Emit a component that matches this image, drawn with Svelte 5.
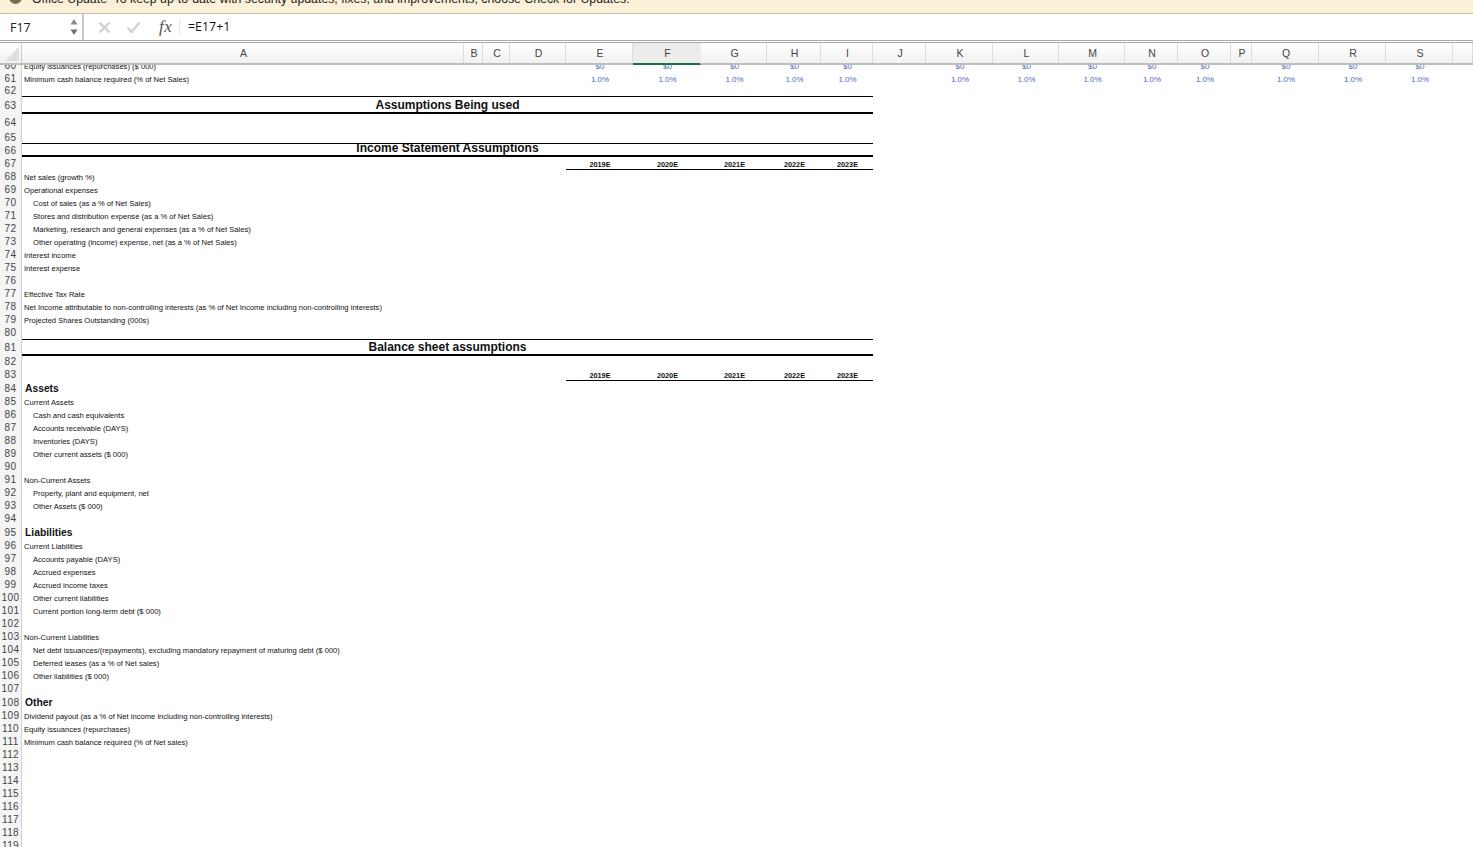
<script>
  const letters = 'ABCDEFGHIJKLMNOPQRST'.split('');
  const dataCols = ['E', 'F', 'G', 'H', 'I', 'K', 'L', 'M', 'N', 'O', 'Q', 'R', 'S'];
  const years = ['2019E', '2020E', '2021E', '2022E', '2023E'];
  const heights = { 62: 11, 63: 18, 64: 17, 65: 12, 66: 14, 67: 13, 81: 16, 84: 14, 95: 14, 108: 14 };
  const content = {
    60: { text: 'Equity issuances (repurchases) ($ 000)', values: '$0' },
    61: { text: 'Minimum cash balance required (% of Net Sales)', values: '1.0%' },
    63: { title: 'Assumptions Being used' },
    66: { title: 'Income Statement Assumptions', low: true },
    67: { years: true },
    68: { text: 'Net sales (growth %)' },
    69: { text: 'Operational expenses' },
    70: { text: 'Cost of sales (as a % of Net Sales)', indent: true },
    71: { text: 'Stores and distribution expense (as a % of Net Sales)', indent: true },
    72: { text: 'Marketing, research and general expenses (as a % of Net Sales)', indent: true },
    73: { text: 'Other operating (income) expense, net (as a % of Net Sales)', indent: true },
    74: { text: 'Interest income' },
    75: { text: 'Interest expense' },
    77: { text: 'Effective Tax Rate' },
    78: { text: 'Net Income attributable to non-controlling interests (as % of Net Income including non-controlling interests)' },
    79: { text: 'Projected Shares Outstanding (000s)' },
    81: { title: 'Balance sheet assumptions' },
    83: { years: true },
    84: { text: 'Assets', bold: true },
    85: { text: 'Current Assets' },
    86: { text: 'Cash and cash equivalents', indent: true },
    87: { text: 'Accounts receivable (DAYS)', indent: true },
    88: { text: 'Inventories (DAYS)', indent: true },
    89: { text: 'Other current assets ($ 000)', indent: true },
    91: { text: 'Non-Current Assets' },
    92: { text: 'Property, plant and equipment, net', indent: true },
    93: { text: 'Other Assets ($ 000)', indent: true },
    95: { text: 'Liabilities', bold: true },
    96: { text: 'Current Liabilities' },
    97: { text: 'Accounts payable (DAYS)', indent: true },
    98: { text: 'Accrued expenses', indent: true },
    99: { text: 'Accrued income taxes', indent: true },
    100: { text: 'Other current liabilities', indent: true },
    101: { text: 'Current portion long-term debt ($ 000)', indent: true },
    103: { text: 'Non-Current Liabilities' },
    104: { text: 'Net debt issuances/(repayments), excluding mandatory repayment of maturing debt ($ 000)', indent: true },
    105: { text: 'Deferred leases (as a % of Net sales)', indent: true },
    106: { text: 'Other liabilities ($ 000)', indent: true },
    108: { text: 'Other', bold: true },
    109: { text: 'Dividend payout (as a % of Net income including non-controlling interests)' },
    110: { text: 'Equity issuances (repurchases)' },
    111: { text: 'Minimum cash balance required (% of Net sales)' }
  };
  const rows = [];
  for (let n = 60; n <= 119; n++) rows.push({ n, h: heights[n] ?? 13, ...(content[n] ?? {}) });
</script>

<div class="banner">
  <span class="badge"></span>
  <span class="message"><b>Office Update</b>&nbsp; To keep up-to-date with security updates, fixes, and improvements, choose Check for Updates.</span>
</div>

<div class="toolbar">
  <div class="namebox">
    <span>F17</span>
    <svg class="stepper" width="10" height="20" viewBox="0 0 10 20">
      <path d="M5 2 L8.5 7.5 H1.5 Z" fill="#8a8a8a" />
      <path d="M5 18 L8.5 12.5 H1.5 Z" fill="#6f6f6f" />
    </svg>
  </div>
  <div class="actions">
    <svg width="13" height="13" viewBox="0 0 13 13"><path d="M1.5 1.5 L11.5 11.5 M11.5 1.5 L1.5 11.5" stroke="#d0d0d0" stroke-width="2.2" fill="none" /></svg>
    <svg width="15" height="13" viewBox="0 0 15 13"><path d="M1.5 6.5 L5.5 11 L13.5 1.5" stroke="#d0d0d0" stroke-width="2.2" fill="none" /></svg>
    <span class="fx">fx</span>
  </div>
  <div class="formula">=E17+1</div>
</div>

<div class="colheads">
  <div class="corner"><svg width="16" height="16" viewBox="0 0 16 16"><path d="M15 1 V15 H1 Z" fill="#dedede" /></svg></div>
  {#each letters as l}
    <div class="colhead" class:selected={l === 'F'}>{l === 'T' ? '' : l}</div>
  {/each}
</div>

<div class="sheet">
  {#each rows as r}
    <div class="row" style="height:{r.h}px">
      <div class="rowhead">{r.n}</div>
      {#if r.title}
        <div class="title" class:low={r.low}>{r.title}</div>
      {:else if r.years}
        <div class="years">
          {#each years as y}<span>{y}</span>{/each}
        </div>
      {:else}
        {#if r.text}
          <div class="label" class:indent={r.indent} class:bold={r.bold}>{r.text}</div>
        {/if}
        {#if r.values}
          {#each dataCols as c}
            <div class="value" style="grid-column:{letters.indexOf(c) + 2}">{r.values}</div>
          {/each}
        {/if}
      {/if}
    </div>
  {/each}
</div>

<style>
  :global(html), :global(body) {
    margin: 0;
    height: 100%;
    overflow: hidden;
    background: #fff;
    font-family: "Liberation Sans", Arial, sans-serif;
  }
  .banner {
    height: 13px;
    background: #fbf1d9;
    border-bottom: 1px solid #c9bfa9;
    display: flex;
    align-items: flex-end;
    overflow: hidden;
    padding-left: 9px;
    gap: 10px;
  }
  .badge {
    flex: none;
    width: 13px;
    height: 13px;
    margin-bottom: 9px;
    border-radius: 50%;
    background: #7a6a50;
  }
  .message {
    flex: none;
    font-size: 12.3px;
    line-height: 14px;
    margin-bottom: 7px;
    color: #1c1c1c;
    white-space: nowrap;
  }
  .message b { font-weight: 400; }
  .toolbar {
    height: 26px;
    background: #fff;
    display: flex;
    align-items: center;
    border-bottom: 3px double #a9a9a9;
  }
  .namebox {
    width: 84px;
    height: 100%;
    box-sizing: border-box;
    border-right: 2px solid #c9c9c9;
    padding: 0 3px 0 10px;
    display: flex;
    align-items: center;
    justify-content: space-between;
    font-family: "Open Sans", sans-serif;
    font-size: 12.5px;
    color: #222;
  }
  .actions {
    width: 95px;
    height: 100%;
    display: flex;
    align-items: center;
    padding-left: 14px;
    box-sizing: border-box;
    gap: 15px;
  }
  .fx {
    font-family: "Liberation Serif", serif;
    font-style: italic;
    font-size: 17px;
    color: #555;
    padding-left: 3px;
    letter-spacing: 0.5px;
  }
  .formula {
    border-left: 1px solid #e2e2e2;
    padding-left: 8px;
    height: 14px;
    line-height: 14px;
    font-family: "Open Sans", sans-serif;
    font-size: 12.4px;
    color: #111;
  }
  .colheads, .row {
    display: grid;
    grid-template-columns: 22px 442px 19px 27px 56px 67px 68px 66px 54px 52px 53px 67px 66px 66px 53px 53px 21px 67px 67px 67px 20px;
  }
  .colheads {
    position: relative;
    z-index: 1;
    height: 22px;
    box-sizing: border-box;
    background: linear-gradient(#fff, #f1f1f1);
    border-bottom: 2px solid #bdbdbd;
  }
  .corner {
    border-right: 1px solid #c9c9c9;
    display: flex;
    align-items: flex-end;
    padding-left: 4px;
    padding-bottom: 1px;
  }
  .colhead {
    box-sizing: border-box;
    padding-left: 2px;
    border-right: 1px solid #dcdcdc;
    font-size: 10.5px;
    line-height: 20px;
    text-align: center;
    color: #444;
  }
  .colhead.selected {
    background: #ececec;
    margin-bottom: -2px;
    border-bottom: 2px solid #1e6e42;
    border-right-color: #ececec;
  }
  .sheet {
    margin-top: -6px;
  }
  .row {
    font-size: 7.6px;
    color: #111;
    align-items: stretch;
  }
  .rowhead {
    grid-column: 1;
    background: #f5f5f5;
    border-right: 1px solid #cfcfcf;
    font-size: 10px;
    color: #444;
    display: flex;
    align-items: center;
    justify-content: center;
    letter-spacing: 0.4px;
    overflow: hidden;
    white-space: nowrap;
    box-sizing: border-box;
  }
  .label {
    grid-column: 2;
    grid-row: 1;
    padding-left: 2px;
    padding-top: 1px;
    display: flex;
    align-items: center;
    white-space: nowrap;
  }
  .label.indent { padding-left: 11px; }
  .label.bold {
    padding-left: 3px;
    padding-top: 0;
    font-size: 10.3px;
    font-weight: 700;
    color: #111;
  }
  .value {
    grid-row: 1;
    display: flex;
    align-items: center;
    justify-content: center;
    padding: 1px 0 0 1px;
    color: #4a6bb8;
    font-size: 8px;
  }
  .title {
    grid-column: 2 / 11;
    box-sizing: border-box;
    border-top: 1px solid #000;
    border-bottom: 2px solid #000;
    display: flex;
    align-items: center;
    justify-content: center;
    font-size: 12px;
    font-weight: 700;
    color: #111;
    white-space: nowrap;
  }
  .title.low { padding-bottom: 2px; line-height: 9px; }
  .years {
    grid-column: 6 / 11;
    display: grid;
    grid-template-columns: 67px 68px 66px 54px 52px;
    border-bottom: 1px solid #000;
    box-sizing: border-box;
    font-size: 7.3px;
    font-weight: 700;
    color: #111;
  }
  .years span {
    display: flex;
    align-items: flex-end;
    justify-content: center;
    padding-left: 1px;
    line-height: 9px;
  }
</style>
